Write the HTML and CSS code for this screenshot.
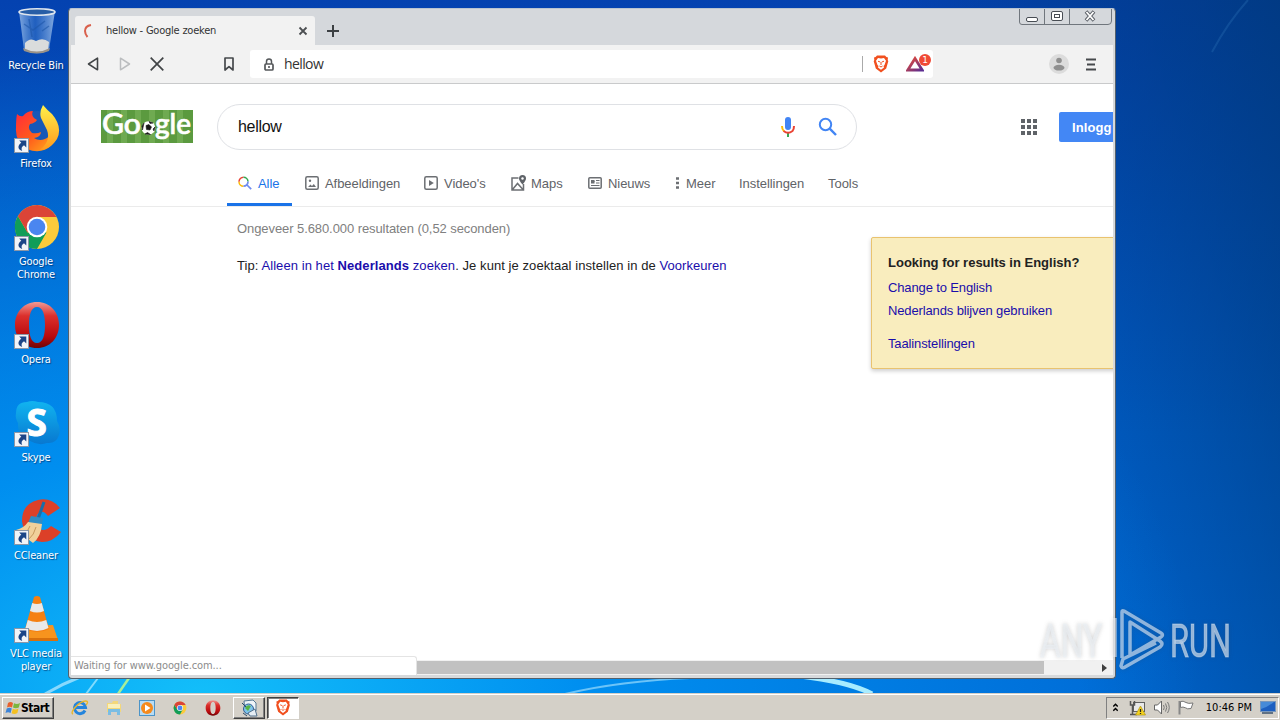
FILE: index.html
```html
<!DOCTYPE html>
<html lang="nl">
<head>
    <meta charset="utf-8">
    <title>hellow - Google zoeken</title>
    <link rel="stylesheet" href="styles.css">
</head>
<body>
    <svg class="defs" width="0" height="0">
        <defs>
            <linearGradient id="operaRed" x1="0" y1="0" x2="0" y2="1">
                <stop offset="0" stop-color="#f09a94"/><stop offset=".3" stop-color="#dc302c"/><stop offset=".75" stop-color="#b80a0e"/><stop offset="1" stop-color="#6e0508"/>
            </linearGradient>
            <linearGradient id="foxFire" x1="0" y1="0" x2="1" y2="1">
                <stop offset="0" stop-color="#ff2a3c"/><stop offset=".5" stop-color="#ff5a1c"/><stop offset="1" stop-color="#ffb81c"/>
            </linearGradient>
            <linearGradient id="foxTail" x1="0" y1="0" x2="0" y2="1">
                <stop offset="0" stop-color="#fff04a"/><stop offset="1" stop-color="#ff9a1e"/>
            </linearGradient>
            <linearGradient id="skypeBlue" x1="0" y1="0" x2="0" y2="1">
                <stop offset="0" stop-color="#11b4f0"/><stop offset="1" stop-color="#0878d0"/>
            </linearGradient>
            <linearGradient id="glass" x1="0" y1="0" x2="1" y2="0">
                <stop offset="0" stop-color="#a9c9ee" stop-opacity=".75"/><stop offset=".45" stop-color="#3d7bcc" stop-opacity=".5"/><stop offset="1" stop-color="#a4c4ec" stop-opacity=".8"/>
            </linearGradient>
            <linearGradient id="batFill" x1="0" y1="0" x2="1" y2="1">
                <stop offset="0" stop-color="#e84a35"/><stop offset="1" stop-color="#5c2d91"/>
            </linearGradient>
            <symbol id="chrome" viewBox="0 0 48 48">
                <circle cx="24" cy="24" r="22" fill="#fbcb3c"/>
                <path d="M4.9 13 A22 22 0 0 0 24 46 L33.5 29.5 L14.5 29.5Z" fill="#109d58"/>
                <path d="M4.9 13 A22 22 0 0 1 43.5 14 L24 14 L14.5 29.5Z" fill="#db4437"/>
                <circle cx="24" cy="24" r="10.3" fill="#fff"/>
                <circle cx="24" cy="24" r="8.3" fill="#4a86f0"/>
            </symbol>
            <symbol id="opera" viewBox="0 0 48 48">
                <path fill-rule="evenodd" d="M24 1 C37 1 46 11 46 24 S37 47 24 47 2 37 2 24 11 1 24 1Z M24 6 C18 6 16 14 16 24 S18 42 24 42 32 34 32 24 30 6 24 6Z" fill="url(#operaRed)"/>
            </symbol>
            <symbol id="brave" viewBox="0 0 16 18">
                <path d="M4 .5 H12 L13.4 2 L15 2.6 L14.7 5 L15.3 6.3 L13.2 13.5 L8 17.5 L2.8 13.5 L.7 6.3 L1.3 5 L1 2.6 L2.6 2Z" fill="#f1501f"/>
                <path d="M5 3 L8 3.5 L11 3 L13 5.8 L11.5 10 L10.5 11 L11 12.5 L8 14.7 L5 12.5 L5.5 11 L4.5 10 L3 5.8Z" fill="#fff"/>
                <path d="M5 6.2 L7.2 7 M11 6.2 L8.8 7 M8 7 V10 M6.4 11 L8 12 L9.6 11" stroke="#f1501f" stroke-width="1" fill="none"/>
            </symbol>
            <symbol id="shortcut" viewBox="0 0 15 15">
                <rect x=".5" y=".5" width="14" height="14" fill="#f2f4f8" stroke="#8b97a8"/>
                <path d="M5.2 2.5 H12.3 V9.5 L10 7.3 C7.5 8.8 7 10.6 8.2 13 C3.6 11.5 3.2 7.6 7.3 4.8Z" fill="#1c4587"/>
            </symbol>
            <symbol id="lens" viewBox="0 0 24 24">
                <circle cx="9.5" cy="9.5" r="5.7" fill="none" stroke="currentColor" stroke-width="2"/>
                <path d="M13.7 13.7 L20 20" stroke="currentColor" stroke-width="2.4"/>
            </symbol>
        </defs>
    </svg>

    <div class="desktop">
        <svg class="wallpaper" width="1280" height="694" viewBox="0 0 1280 694">
            <path d="M45 694 Q62 684 80 677" stroke="#a8e4ff" stroke-width="3" fill="none" opacity=".8"/>
            <path d="M86 694 L98 678" stroke="#9fe6ff" stroke-width="2" opacity=".8"/>
            <path d="M118 694 L129 678" stroke="#a6ee9a" stroke-width="2.5"/>
            <path d="M565 694 Q620 681 690 678" stroke="#6cc4f8" stroke-width="2" fill="none"/>
            <path d="M800 676 Q850 682 872 694" stroke="#a8ecff" stroke-width="5" fill="none"/>
            <path d="M1212 52 Q1228 22 1248 0" stroke="#2a6fb4" stroke-width="2" fill="none" opacity=".35"/>
        </svg>

        <div class="shortcuts">
            <div class="shortcut">
                <svg width="48" height="48" viewBox="0 0 48 48">
                    <path d="M6 4 L11 43 Q24 50 36 43 L42 4Z" fill="url(#glass)"/>
                    <path d="M12 36 Q17 30 23 34 Q30 30 36 35 L35 43 Q24 48 12 43Z" fill="#dadcdc"/>
                    <path d="M10 41 Q24 48 37 41 L36 44 Q24 49 11 44Z" fill="#9a9288"/>
                    <ellipse cx="24" cy="5" rx="18" ry="3.2" fill="#285ea6" stroke="#dfe6ee" stroke-width="1.6"/>
                    <path d="M11 17 L20 23 L32 14 M16 12 L19 30 M29 24 L36 19" stroke="#1e56a8" stroke-width="1.5" fill="none" opacity=".6"/>
                </svg>
                <span>Recycle Bin</span>
            </div>
            <div class="shortcut">
                <svg width="48" height="48" viewBox="0 0 48 48">
                    <circle cx="25" cy="25" r="19" fill="#1758b8"/>
                    <path d="M4 9 Q7 12 10 11 Q14 6 20 6 Q18 10 21 13 L24 15 Q22 18 17 19 Q14 24 19 28 Q24 29 28 27 Q28 32 21 33 Q28 38 37 31 Q42 26 41 17 Q48 28 39 40 Q28 50 14 44 Q2 37 3 23 Q3 14 4 9Z" fill="url(#foxFire)"/>
                    <path d="M30 0 Q35 6 39 9 Q50 22 44 34 Q38 44 27 45 Q38 36 34 25 Q31 19 28 13 Q26 7 30 0Z" fill="url(#foxTail)"/>
                </svg>
                <svg class="arrow"><use href="#shortcut"/></svg>
                <span>Firefox</span>
            </div>
            <div class="shortcut">
                <svg width="48" height="48"><use href="#chrome"/></svg>
                <svg class="arrow"><use href="#shortcut"/></svg>
                <span>Google<br>Chrome</span>
            </div>
            <div class="shortcut">
                <svg width="48" height="48"><use href="#opera"/></svg>
                <svg class="arrow"><use href="#shortcut"/></svg>
                <span>Opera</span>
            </div>
            <div class="shortcut">
                <svg width="48" height="48" viewBox="0 0 48 48">
                    <path d="M3 14 Q3 3 14 3 Q19 1 25 3 Q44 3 44 22 Q48 29 46 36 Q43 45 34 44 Q26 47 17 42 Q4 37 5 24 Q2 19 3 14Z" fill="url(#skypeBlue)"/>
                    <text x="23.5" y="36.500" class="skype-s" text-anchor="middle">S</text>
                </svg>
                <svg class="arrow"><use href="#shortcut"/></svg>
                <span>Skype</span>
            </div>
            <div class="shortcut">
                <svg width="48" height="48" viewBox="0 0 48 48">
                    <path d="M47 11 Q38 0 25 3 Q9 7 9 24 Q11 43 29 45 Q40 45 48 35 L38 29 Q32 35 27 32 Q21 27 24 18 Q29 11 35 19Z" fill="#dc4028"/>
                    <path d="M31 5 L25 22" stroke="#1b6da8" stroke-width="3"/>
                    <path d="M18 19 L30 21 L29 27 L15 26Z" fill="#2f8cc4"/>
                    <path d="M15 25 L29 27 Q28 40 20 46 L3 33 Q11 31 15 25Z" fill="#f1d19b"/>
                    <path d="M17 29 Q15 35 10 38 M23 30 Q21 38 16 42" stroke="#c79a5e" fill="none"/>
                </svg>
                <svg class="arrow"><use href="#shortcut"/></svg>
                <span>CCleaner</span>
            </div>
            <div class="shortcut">
                <svg width="48" height="48" viewBox="0 0 48 48">
                    <path d="M14 31 L40 30 L45 45 L9 45Z" fill="#f7941e"/>
                    <path d="M9 43 H45 V46 H9Z" fill="#d8700c"/>
                    <path d="M21 2 Q24 0 27 2 L36 34 Q24 40 12 34Z" fill="#f58012"/>
                    <path d="M19.2 8 Q24 10 28.8 8 L31 16 Q24 19 17 16Z M14.8 25 Q24 29 33.2 25 L35.5 33 Q24 39 12.5 33Z" fill="#e9e9e9"/>
                </svg>
                <svg class="arrow"><use href="#shortcut"/></svg>
                <span>VLC media<br>player</span>
            </div>
        </div>

        <div class="window">
            <div class="tabstrip">
                <div class="tab">
                    <svg class="spinner" width="14" height="16" viewBox="0 0 14 16"><path d="M9 2 Q3 3 3 8 Q3 11 5.5 14" fill="none" stroke="#d9604c" stroke-width="2"/></svg>
                    <span class="tab-title">hellow - Google zoeken</span>
                    <svg width="10" height="10" viewBox="0 0 10 10"><path d="M1.5 1.5 L8.5 8.5 M8.5 1.5 L1.5 8.5" stroke="#4c4f52" stroke-width="1.8"/></svg>
                </div>
                <svg class="new-tab" width="12" height="12" viewBox="0 0 12 12"><path d="M6 0 V12 M0 6 H12" stroke="#3c4043" stroke-width="2"/></svg>
                <div class="caption-buttons">
                    <svg width="93" height="16" viewBox="0 0 93 16">
                        <path d="M.5 0 V13 Q.5 15.5 3 15.5 H89 Q92.5 15.5 92.5 12 V0 M25.5 0 V15 M50.5 0 V15" fill="none" stroke="#70767d"/>
                        <rect x="7.5" y="8.5" width="11" height="4" rx="1.5" fill="#fff" stroke="#484d54"/>
                        <rect x="32.5" y="2.5" width="11" height="9" rx="1.5" fill="#fff" stroke="#484d54"/>
                        <rect x="35.5" y="5.500" width="5" height="3" fill="#fff" stroke="#484d54"/>
                        <path d="M67 2.500 L75 11.500 M75 2.500 L67 11.500" stroke="#5c6168" stroke-width="3.6"/>
                        <path d="M67.5 3 L74.5 11 M74.5 3 L67.5 11" stroke="#fff" stroke-width="1.8"/>
                    </svg>
                </div>
            </div>

            <div class="toolbar">
                <svg class="back" width="12" height="14" viewBox="0 0 12 14"><path d="M10.5 1.2 V12.8 L1.5 7Z" fill="none" stroke="#414446" stroke-width="1.6" stroke-linejoin="round"/></svg>
                <svg class="forward" width="12" height="14" viewBox="0 0 12 14"><path d="M1.5 1.2 V12.8 L10.5 7Z" fill="none" stroke="#bbbdbf" stroke-width="1.5" stroke-linejoin="round"/></svg>
                <svg class="stop" width="14" height="14" viewBox="0 0 14 14"><path d="M.7 .7 L13.3 13.3 M13.3 .7 L.7 13.3" stroke="#414446" stroke-width="1.7"/></svg>
                <svg class="bookmark" width="10" height="14" viewBox="0 0 10 14"><path d="M1 1 H9 V13 L5 9.7 L1 13Z" fill="none" stroke="#46494c" stroke-width="1.7" stroke-linejoin="round"/></svg>
                <div class="address">
                    <svg width="10" height="13" viewBox="0 0 10 13"><path d="M2.500 6 V3.500 Q2.500 1 5 1 T7.500 3.500 V6" fill="none" stroke="#55585b" stroke-width="1.500"/><rect x="1" y="6" width="8" height="6" rx="1" fill="#fff" stroke="#55585b" stroke-width="1.700"/><rect x="4.200" y="8" width="1.600" height="2" fill="#55585b"/></svg>
                    <span class="url">hellow</span>
                    <div class="shields">
                        <svg width="16" height="18"><use href="#brave"/></svg>
                        <div class="rewards">
                            <svg width="18" height="16" viewBox="0 0 18 16"><path d="M9 2.500 L16.200 14 H1.800Z" fill="none" stroke="url(#batFill)" stroke-width="2.800"/></svg>
                            <span class="badge">1</span>
                        </div>
                    </div>
                </div>
                <svg class="profile" width="20" height="20" viewBox="0 0 20 20"><circle cx="10" cy="10" r="10" fill="#dcdcdc"/><circle cx="10" cy="6.500" r="2.800" fill="#909090"/><ellipse cx="10" cy="13.700" rx="5.500" ry="2.900" fill="#909090"/></svg>
                <svg width="10" height="13" viewBox="0 0 10 13"><path d="M0 1.500 H10 M1 6.500 H9 M0 11.500 H10" stroke="#46494c" stroke-width="2"/></svg>
            </div>

            <div class="page">
                <div class="search-header">
                    <svg class="doodle" width="92" height="33" viewBox="0 0 92 33">
                        <rect width="92" height="33" fill="#5b9a3f"/>
                        <path d="M9 0V33M23 0V33M37 0V33M51 0V33M65 0V33M79 0V33" stroke="#6faa51" stroke-width="6"/>
                        <text x="1" y="24" class="doodle-text" textLength="39" lengthAdjust="spacingAndGlyphs">Go</text>
                        <text x="54" y="24" class="doodle-text" textLength="36" lengthAdjust="spacingAndGlyphs">gle</text>
                        <circle cx="47.5" cy="18" r="6.800" fill="#fff"/>
                        <path d="M45 15.500 L48 14.500 L50.500 17 L49 20 L45.500 19.500Z M41 16 L43 13 L41.500 20Z M48 11.500 L52 13 L49 13.500Z M54 17 L53 21 L52 19Z M44 24 L46.500 22.500 L49.500 24.500Z" fill="#171717" stroke="#171717" stroke-width=".6"/>
                    </svg>
                    <div class="searchbox">
                        <span class="query">hellow</span>
                        <svg class="mic" width="24" height="24" viewBox="0 0 24 24">
                            <path d="M12 17 V22" stroke="#34a853" stroke-width="2"/>
                            <path d="M6 11 Q6 14.500 8 16.300" fill="none" stroke="#fbbc05" stroke-width="2"/>
                            <path d="M7.600 16 Q12 19.500 16.500 16 Q18 14.500 18 11" fill="none" stroke="#ea4335" stroke-width="2"/>
                            <rect x="9" y="2" width="6" height="13" rx="3" fill="#4285f4"/>
                        </svg>
                        <svg class="go" width="24" height="24"><use href="#lens"/></svg>
                    </div>
                    <svg class="apps" width="16" height="16" viewBox="0 0 16 16"><path d="M0 2H4M6 2H10M12 2H16M0 8H4M6 8H10M12 8H16M0 14H4M6 14H10M12 14H16" stroke="#5f6368" stroke-width="4"/></svg>
                    <div class="login">Inlogg</div>
                </div>

                <div class="filters">
                    <div class="filter active">
                        <svg width="14" height="14" viewBox="0 0 14 14"><path d="M1 5.700 A4.500 4.500 0 0 1 5.500 1.200" stroke="#ea4335" stroke-width="1.500" fill="none"/><path d="M5.500 1.200 A4.500 4.500 0 0 1 10 5.500" stroke="#34a853" stroke-width="1.500" fill="none"/><path d="M1 5.700 A4.500 4.500 0 0 0 5.500 10.200" stroke="#fbbc05" stroke-width="1.500" fill="none"/><path d="M5.500 10.200 A4.500 4.500 0 0 0 10 5.500 M9 9 L13.200 13.200" stroke="#6f8cf0" stroke-width="1.700" fill="none"/></svg>
                        Alle
                    </div>
                    <div class="filter">
                        <svg width="14" height="14" viewBox="0 0 14 14"><rect x=".8" y=".8" width="12.400" height="12.400" rx="1.500" fill="none" stroke="#6c6f73" stroke-width="1.500"/><path d="M3 11 L5.500 8.500 L7 10 L8.800 8 L11 11Z" fill="#6c6f73"/><circle cx="5" cy="4.800" r="1.200" fill="#6c6f73"/></svg>
                        Afbeeldingen
                    </div>
                    <div class="filter">
                        <svg width="14" height="14" viewBox="0 0 14 14"><rect x=".8" y=".8" width="12.400" height="12.400" rx="1.500" fill="none" stroke="#6c6f73" stroke-width="1.500"/><path d="M5 4 L9.800 7 L5 10Z" fill="#6c6f73"/></svg>
                        Video's
                    </div>
                    <div class="filter maps">
                        <svg width="15" height="16" viewBox="0 0 15 16"><path d="M7.500 3 H1 V15 H12.500 V9 M1.500 14.500 L6.500 8.500 L12 14.500" fill="none" stroke="#6c6f73" stroke-width="1.500"/><path d="M11.500 0 Q15 0 15 3.500 Q15 5.500 11.500 9.500 Q8 5.500 8 3.500 Q8 0 11.500 0Z" fill="#5f6368"/><circle cx="11.500" cy="3.500" r="1.200" fill="#fff"/></svg>
                        Maps
                    </div>
                    <div class="filter">
                        <svg width="14" height="12" viewBox="0 0 14 12"><rect x=".8" y=".8" width="12.400" height="10.400" rx="1" fill="none" stroke="#6c6f73" stroke-width="1.500"/><path d="M3 4.500 H6.500 M8 3.500 H11.500 M8 6 H11.500 M3 8.500 H11.500" stroke="#6c6f73" stroke-width="1.200"/><rect x="3" y="3" width="3.500" height="3.500" fill="#6c6f73"/></svg>
                        Nieuws
                    </div>
                    <div class="filter more">
                        <svg width="3" height="12" viewBox="0 0 3 12"><path d="M0 1.500H3M0 6H3M0 10.500H3" stroke="#6c6f73" stroke-width="2.400"/></svg>
                        Meer
                    </div>
                    <div class="filter">Instellingen</div>
                    <div class="filter">Tools</div>
                </div>

                <div class="results">
                    <div class="main">
                        <div class="stats">Ongeveer 5.680.000 resultaten (0,52 seconden)</div>
                        <div class="tip">Tip: <a>Alleen in het <b>Nederlands</b> zoeken</a>. Je kunt je zoektaal instellen in de <a>Voorkeuren</a></div>
                    </div>
                    <div class="language-card">
                        <div class="card-title">Looking for results in English?</div>
                        <a>Change to English</a>
                        <a>Nederlands blijven gebruiken</a>
                        <a class="settings">Taalinstellingen</a>
                    </div>
                </div>

                <div class="scrollbar">
                    <div class="thumb"></div>
                    <svg width="5" height="8" viewBox="0 0 5 8"><path d="M0 0 L5 4 L0 8Z" fill="#404040"/></svg>
                </div>
                <div class="status">Waiting for www.google.com...</div>
            </div>
        </div>

        <svg class="watermark" width="200" height="66" viewBox="0 0 200 66">
            <g class="mark-text">
                <text x="5" y="49" textLength="62" lengthAdjust="spacingAndGlyphs">ANY</text>
                <text x="135" y="49" textLength="61" lengthAdjust="spacingAndGlyphs">RUN</text>
            </g>
            <path d="M80 10 V49 M87 50 V4 Q87 2 89 3 L126 25 Q129 27 126 29 L95 47 V14 L125 33 Q129 36 125 39 L90 59 Q87 61 86 58 L88 51 L121 35" class="mark-line"/>
        </svg>

        <div class="taskbar">
            <div class="start">
                <svg width="16" height="16" viewBox="0 0 16 16"><path d="M3 3 Q5.500 1 8 3 L7 7.500 Q4.500 6 2 7.500Z" fill="#e8602c"/><path d="M9 3.200 Q12 4.800 15 3 L13.800 7.500 Q11 9 8 7.600Z" fill="#7cb63c"/><path d="M1.700 8.500 Q4.500 7 6.800 8.500 L5.600 13 Q3 11.500 .5 13Z" fill="#3c84d8"/><path d="M7.800 8.800 Q10.500 10.300 13.500 8.600 L12.400 13 Q9.500 14.700 6.600 13.200Z" fill="#f4c020"/></svg>
                <span>Start</span>
            </div>
            <div class="quick-launch">
                <svg width="18" height="16" viewBox="0 0 18 16"><path d="M14 10.500 A5.500 5.500 0 1 1 14.500 7.500 H4.500" fill="none" stroke="#2484dc" stroke-width="3"/><path d="M2 14 Q-.5 13 4 7.500 Q11 0 15.800 1.200 Q17.500 2 15 5" fill="none" stroke="#e8b62c" stroke-width="1.400"/></svg>
                <svg width="16" height="16" viewBox="0 0 16 16"><path d="M1 3 H6 L7 1 H12 V4 H15 V12 H1Z" fill="#f3d77a"/><path d="M2 4 H14 V8 H2Z" fill="#faf0bb"/><path d="M2 15 V9 H14 V15 H11 V12 H5 V15Z" fill="#7abde4"/></svg>
                <svg width="16" height="16" viewBox="0 0 16 16"><rect x=".5" y=".5" width="15" height="15" fill="#b8dcf4" stroke="#4c94c8"/><circle cx="8" cy="8" r="6" fill="#f58a1c"/><path d="M6 4.500 L11.500 8 L6 11.500Z" fill="#fff"/></svg>
                <svg width="16" height="14"><use href="#chrome"/></svg>
                <svg width="16" height="16"><use href="#opera"/></svg>
            </div>
            <div class="task">
                <svg width="18" height="18" viewBox="0 0 18 18"><path d="M4 2 L13 1 L16 4 V12 L5 13Z" fill="#eef4f8" stroke="#547894"/><circle cx="8.500" cy="10" r="5" fill="#7ec4ea" stroke="#315b92"/><path d="M5 9 Q7 5 11 7 L8 12Z" fill="#58b445"/><path d="M8 14 L15 10 L17 17 H10Z" fill="#e6eef4" stroke="#52708c"/><path d="M2 4 L6 8 M3 14 L7 17" stroke="#294a68"/></svg>
            </div>
            <div class="task current">
                <svg width="16" height="17" viewBox="0 0 16 18"><use href="#brave"/></svg>
            </div>
            <div class="tray">
                <svg width="5" height="9" viewBox="0 0 5 9"><path d="M.3 3.500 L2.500 1.300 L4.700 3.500 M.3 7.700 L2.500 5.500 L4.700 7.700" fill="none" stroke="#000" stroke-width="1.400"/></svg>
                <svg class="network" width="17" height="16" viewBox="0 0 17 16"><rect x="4.500" y="2.500" width="11" height="9" fill="#e8e8e8" stroke="#606060"/><path d="M1.500 1 V5 H5.500 V1 M3.500 5 V14 M1 14.500 H8" stroke="#555" fill="none" stroke-width="1.500"/><path d="M11.500 6 L16.500 15 H6.500Z" fill="#f4d21f" stroke="#a88c08" stroke-width=".6"/><path d="M11.500 9 V12 M11.500 13 V14" stroke="#222" stroke-width="1.300"/></svg>
                <svg class="volume" width="17" height="15" viewBox="0 0 17 15"><path d="M.5 5 H3.500 L7.500 1 V14 L3.500 10 H.5Z" fill="#fff" stroke="#666"/><path d="M9.500 5 Q11 7.500 9.500 10 M11.500 3.500 Q14 7.500 11.500 11.500 M13.500 2 Q17 7.500 13.500 13" fill="none" stroke="#777"/></svg>
                <svg class="flag" width="16" height="15" viewBox="0 0 16 15"><path d="M1.500 1 V14.500" stroke="#888" stroke-width="2"/><path d="M2.500 1.500 Q5 .5 8 2.500 Q10 4 15 3 L13 8.500 Q9 9.500 7.500 7.800 Q5 6.500 2.500 7.500Z" fill="#fff" stroke="#777"/></svg>
                <span class="clock">10:46 PM</span>
                <svg width="16" height="13" viewBox="0 0 16 13"><rect x=".5" y=".5" width="15" height="10" fill="#1d5fc0" stroke="#7897bc"/><path d="M1 8 Q8 6 14 1 H1Z" fill="#468ad8"/><path d="M2 12 H13" stroke="#3b536e" stroke-width="1.500"/></svg>
            </div>
        </div>
    </div>
</body>
</html>
```

FILE: styles.css
```css
* { box-sizing: border-box; }
body { margin: 0; overflow: hidden; font-family: "Liberation Sans", Arial, sans-serif; }
svg { display: block; flex: none; }
.defs { position: absolute; }

.desktop {
    position: relative;
    display: flex;
    flex-direction: column;
    width: 1280px;
    height: 720px;
    overflow: hidden;
    background:
        radial-gradient(ellipse 1000px 660px at 200px 700px, rgba(20, 196, 252, 0.95), rgba(0, 150, 245, 0.85) 38%, rgba(0, 90, 200, 0) 100%),
        linear-gradient(75deg, rgba(0, 90, 210, 0) 74%, rgba(0, 56, 120, 0.9) 104%),
        linear-gradient(#0442b0, #0060cc 60%, #0068d4);
}
.wallpaper { position: absolute; left: 0; top: 0; }

/* desktop icons */
.shortcuts { flex: 1; width: 72px; padding-top: 7px; }
.shortcut {
    position: relative;
    height: 98px;
    display: flex;
    flex-direction: column;
    align-items: center;
    font: 11px/13px "DejaVu Sans Condensed", "DejaVu Sans", sans-serif;
    font-stretch: condensed;
    letter-spacing: -0.15px;
    color: #fff;
    text-align: center;
    text-shadow: 1px 1px 1px rgba(0, 30, 80, 0.6);
}
.shortcut svg { margin: 0 0 4px 2px; }
.shortcut .arrow { position: absolute; left: 14px; top: 33px; width: 15px; height: 15px; margin: 0; }
.shortcut span { white-space: nowrap; }
.skype-s { font: bold 37px "Open Sans", sans-serif; fill: #fff; stroke: #fff; stroke-width: 1px; text-shadow: none; }

/* browser window */
.window {
    position: absolute;
    left: 68px;
    top: 8px;
    width: 1048px;
    height: 671px;
    display: flex;
    flex-direction: column;
    padding: 0 2px 3px 2px;
    background: #d7d9db;
    border: 1px solid #53606c;
    border-top-color: #b9c4d0;
    border-radius: 4px;
}
.tabstrip { display: flex; height: 36px; padding: 7px 0 0 4px; background: #d5d8dc; }
.tab {
    display: flex;
    align-items: center;
    width: 240px;
    padding: 0 7px;
    background: #f2f2f2;
    border-radius: 3px 3px 0 0;
    font: 11px "DejaVu Sans Condensed", "DejaVu Sans", sans-serif;
    font-stretch: condensed;
    letter-spacing: -0.22px;
    color: #333;
}
.tab-title { flex: 1; margin-left: 10px; }
.new-tab { margin: 9px 0 0 12px; }
.caption-buttons { margin: -7px 1px 0 auto; }

.toolbar {
    display: flex;
    align-items: center;
    height: 39px;
    padding: 0 17px 0 16px;
    background: #f2f2f2;
    border-bottom: 1px solid #c9cacb;
}
.forward { margin-left: 20px; }
.stop { margin-left: 19px; }
.bookmark { margin-left: 60px; }
.address {
    display: flex;
    align-items: center;
    width: 683px;
    height: 28px;
    margin-left: 16px;
    padding-left: 14px;
    background: #fff;
    border-radius: 3px;
}
.url { margin: -2px 0 0 10px; font: 14px "Open Sans", sans-serif; letter-spacing: -0.6px; color: #333; }
.shields { display: flex; align-items: center; height: 16px; margin-left: auto; padding-left: 10px; border-left: 1px solid #aaa; }
.rewards { position: relative; width: 18px; margin: 0 10px 0 17px; }
.shields .rewards { margin-right: 9px; }
.badge {
    position: absolute;
    left: 13px;
    top: -2px;
    width: 12px;
    height: 12px;
    border-radius: 50%;
    background: #f04a36;
    color: #fff;
    font: 9px/12px "DejaVu Sans", sans-serif;
    text-align: center;
}
.profile { margin: 0 17px 0 auto; }

/* search page */
.page { position: relative; display: flex; flex: 1; flex-direction: column; background: #fff; overflow: hidden; }
.search-header { display: flex; align-items: center; height: 86px; padding-left: 30px; }
.doodle { margin-top: -1px; }
.doodle-text { font: 500 28px Lato, sans-serif; fill: #fff; stroke: #fff; stroke-width: 0.7px; }
.searchbox {
    display: flex;
    align-items: center;
    flex: none;
    width: 640px;
    height: 46px;
    margin-left: 24px;
    padding: 0 16px 0 20px;
    border: 1px solid #dfe1e5;
    border-radius: 23px;
}
.query { flex: 1; font-size: 16px; letter-spacing: -0.3px; color: #111; }
.go { margin-left: 16px; color: #4285f4; }
.apps { margin-left: 164px; }
.login {
    flex: none;
    width: 90px;
    height: 30px;
    margin-left: 22px;
    padding-left: 13px;
    border-radius: 2px;
    background: #4387f5;
    color: #fff;
    font: bold 13px/31px "Liberation Sans", Arial, sans-serif;
    letter-spacing: 0.1px;
}
.filters {
    display: grid;
    grid-template-columns: 78px 119px 87px 77px 87px 64px 89px 60px;
    height: 37px;
    padding-left: 156px;
    border-bottom: 1px solid #ebebeb;
    font-size: 13px;
    letter-spacing: -0.05px;
    color: #5f6368;
}
.filter { display: flex; gap: 6px; align-items: center; height: 26px; white-space: nowrap; }
.filter.active { width: 65px; height: 36px; padding: 0 0 7px 11px; border-bottom: 3px solid #1a73e8; color: #1a73e8; }
.filter.maps { gap: 5px; }
.filter.more { padding-left: 1px; gap: 7px; }

.results { display: flex; flex: 1; padding-left: 166px; }
.main { flex: none; width: 634px; padding-top: 14px; font-size: 13px; line-height: 16px; }
.stats { color: #808080; letter-spacing: -0.08px; }
.tip { margin-top: 21px; color: #222; letter-spacing: 0.07px; }
a { color: #1a0dab; }
.language-card {
    display: flex;
    flex: none;
    flex-direction: column;
    width: 300px;
    height: 132px;
    margin-top: 30px;
    padding: 16px;
    background: #f9edbe;
    border: 1px solid #e9c36f;
    border-radius: 2px;
    box-shadow: 0 2px 4px rgba(0, 0, 0, 0.2);
    font-size: 13px;
    line-height: 18px;
    color: #222;
}
.card-title { margin-bottom: 7px; font-weight: bold; }
.language-card a { margin-bottom: 5px; letter-spacing: -0.13px; }
.language-card .settings { margin-top: 10px; }

.scrollbar { display: flex; align-items: center; height: 15px; padding: 1px 6px 1px 346px; background: #f1f1f1; }
.thumb { width: 627px; height: 13px; margin-right: auto; background: #c1c1c1; }
.status {
    position: absolute;
    left: 0;
    bottom: 0;
    width: 346px;
    height: 19px;
    padding-left: 3px;
    border: solid #e4e4e4;
    border-width: 1px 1px 0 0;
    border-radius: 0 3px 0 0;
    background: #fff;
    font: 11px/18px "DejaVu Sans Condensed", "DejaVu Sans", sans-serif;
    font-stretch: condensed;
    letter-spacing: -0.1px;
    color: #8c8c8c;
}

/* ANY.RUN logo over the corner */
.watermark { position: absolute; left: 1035px; top: 608px; filter: drop-shadow(0 0 2px rgba(60, 60, 60, 0.35)); }
.mark-text { font: 47px Roboto, sans-serif; fill: rgba(235, 240, 246, 0.62); stroke: rgba(235, 240, 246, 0.4); }
.mark-line { fill: none; stroke: rgba(235, 240, 246, 0.6); stroke-width: 3.5; stroke-linejoin: round; }

/* taskbar */
.taskbar {
    position: relative;
    display: flex;
    align-items: center;
    height: 28px;
    padding: 1px 1px 0 2px;
    background: #d4d0c8;
    border-top: 1px solid #d4d0c8;
    box-shadow: inset 0 1px #fff;
    font: 11px "DejaVu Sans Condensed", "DejaVu Sans", sans-serif;
    font-stretch: condensed;
}
.start {
    display: flex;
    align-items: center;
    width: 52px;
    height: 22px;
    padding-left: 2px;
    border: 1px solid;
    border-color: #fff #404040 #404040 #fff;
    box-shadow: inset -1px -1px #808080;
    font-size: 12px;
    font-weight: bold;
    letter-spacing: -0.5px;
}
.quick-launch { display: flex; align-items: center; gap: 17px; width: 179px; padding-left: 17px; }
.task {
    display: flex;
    align-items: center;
    justify-content: center;
    width: 32px;
    height: 22px;
    margin-right: 2px;
    border: 1px solid;
    border-color: #fff #404040 #404040 #fff;
    box-shadow: inset -1px -1px #808080;
}
.task.current { border-color: #404040 #fff #fff #404040; box-shadow: inset 1px 1px #808080; background: #fff; }
.tray {
    display: flex;
    align-items: center;
    width: 173px;
    height: 22px;
    margin-left: auto;
    padding: 0 2px 0 6px;
    border: 1px solid;
    border-color: #808080 #fff #fff #808080;
}
.network { margin-left: 11px; }
.volume { margin-left: 8px; }
.flag { margin-left: 7px; }
.clock { margin: 0 8px 0 auto; }
```
